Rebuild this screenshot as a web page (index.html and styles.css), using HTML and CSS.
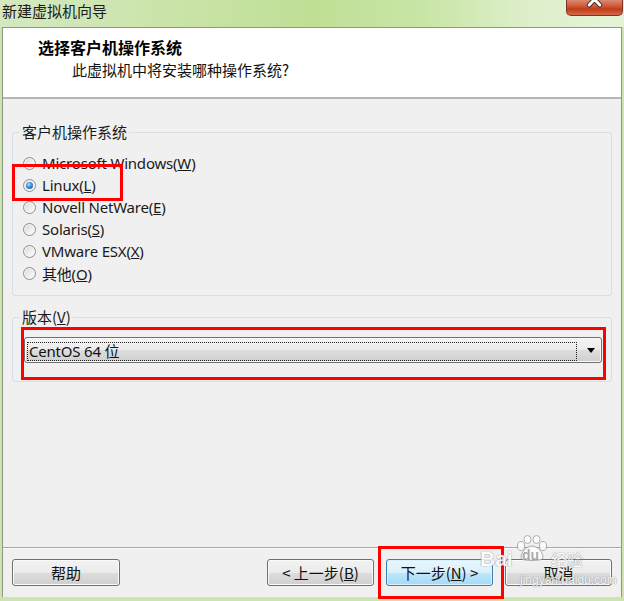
FILE: index.html
```html
<!DOCTYPE html>
<html lang="zh-CN">
<head>
<meta charset="utf-8">
<title>新建虚拟机向导</title>
<link rel="stylesheet" href="styles.css">
</head>
<body>
<div class="window">
  <div class="titlebar">
    <span class="title">新建虚拟机向导</span>
    <div class="close">
      <svg width="57" height="15" viewBox="0 0 57 15">
        <path d="M23 -7 L34 5 M34 -7 L23 5" stroke="#4a2a24" stroke-width="5" stroke-linecap="round"/>
        <path d="M23 -7 L34 5 M34 -7 L23 5" stroke="#ffffff" stroke-width="3" stroke-linecap="round"/>
      </svg>
    </div>
  </div>
  <div class="client">
    <div class="header">
      <div class="h-title">选择客户机操作系统</div>
      <div class="h-sub">此虚拟机中将安装哪种操作系统?</div>
    </div>
    <div class="content">
      <fieldset class="group os-group">
        <legend>客户机操作系统</legend>
        <div class="radio"><span class="dot"></span><span class="rtext">Microsoft Windows(<u>W</u>)</span></div>
        <div class="radio checked"><span class="dot"></span><span class="rtext">Linux(<u>L</u>)</span><span class="mark mark-linux"></span></div>
        <div class="radio"><span class="dot"></span><span class="rtext">Novell NetWare(<u>E</u>)</span></div>
        <div class="radio"><span class="dot"></span><span class="rtext">Solaris(<u>S</u>)</span></div>
        <div class="radio"><span class="dot"></span><span class="rtext">VMware ESX(<u>X</u>)</span></div>
        <div class="radio"><span class="dot"></span><span class="rtext">其他(<u>O</u>)</span></div>
      </fieldset>
      <fieldset class="group ver-group">
        <legend>版本(<u>V</u>)</legend>
        <div class="mark-box">
          <div class="combo">
            <span class="combo-focus">CentOS 64 位</span>
            <span class="arrow"></span>
          </div>
        </div>
      </fieldset>
    </div>
    <div class="footer">
      <button class="btn">帮助</button>
      <div class="nav">
        <button class="btn">&lt; 上一步(<u>B</u>)</button>
        <div class="btn-wrap">
          <button class="btn btn-default">下一步(<u>N</u>) &gt;</button>
          <span class="mark mark-next"></span>
        </div>
        <button class="btn">取消</button>
      </div>
    </div>
  </div>
  <div class="wm-baidu">
    <span class="wm-bai">Bai</span>
    <span class="wm-paw">
      <svg width="32" height="26" viewBox="0 0 32 26">
        <g fill="#ffffff" stroke="#a0a0a0" stroke-width="1">
          <ellipse cx="5" cy="11" rx="3.5" ry="4.5"/>
          <ellipse cx="11.5" cy="4.5" rx="3.5" ry="4"/>
          <ellipse cx="20.5" cy="4.5" rx="3.5" ry="4"/>
          <ellipse cx="27" cy="11" rx="3.5" ry="4.5"/>
          <path d="M16 11 C10 11 5 18 5 22 C5 25 9 25.5 16 25.5 C23 25.5 27 25 27 22 C27 18 22 11 16 11 Z"/>
        </g>
      </svg>
      <span class="wm-du">du</span>
    </span>
    <span class="wm-jy">经验</span>
    <span class="wm-url">jingyan.baidu.com</span>
  </div>
</div>
</body>
</html>
```
FILE: styles.css
```css
* { box-sizing: border-box; }
html, body { margin: 0; padding: 0; }
body {
  width: 624px;
  height: 601px;
  overflow: hidden;
  background: #cde4b0;
  font-family: "Noto Sans", "Noto Sans CJK SC", sans-serif;
  font-size: 14px;
  color: #000;
}
.window {
  position: relative;
  display: flex;
  flex-direction: column;
  height: 601px;
}
.titlebar {
  height: 27px;
  flex: none;
  display: flex;
  justify-content: space-between;
  align-items: flex-start;
  padding-left: 2px;
  background: linear-gradient(90deg, #d5e8c1 0%, #cbe4ab 25%, #c0df95 50%, #c9e5a6 68%, #deefcb 85%, #e6f3d8 100%);
}
.title {
  font-family: "Noto Sans CJK SC", sans-serif;
  font-size: 15px;
  line-height: 19px;
  margin-top: 1px;
  color: #1b1b1b;
}
.close {
  width: 57px;
  height: 16px;
  margin-right: 1px;
  border: 1px solid #7c3528;
  border-top: none;
  border-radius: 0 0 5px 5px;
  background: linear-gradient(#d98a72 0%, #d25a38 40%, #c13b18 60%, #d4694a 100%);
  overflow: hidden;
  display: flex;
}
.client {
  flex: 1;
  display: flex;
  flex-direction: column;
  margin: 0 2px 4px 2px;
  border: 1px solid #8b9985;
  border-bottom: none;
  background: #f0f0f0;
}
.header {
  height: 71px;
  flex: none;
  background: #ffffff;
  border-bottom: 2px solid #b6b6b6;
  padding: 9px 0 0 35px;
  font-family: "Noto Sans CJK SC", sans-serif;
}
.h-title {
  font-size: 16px;
  font-weight: bold;
  line-height: 20px;
}
.h-sub {
  font-size: 15px;
  line-height: 20px;
  margin: 3px 0 0 34px;
  color: #111;
}
.content {
  flex: 1;
  padding: 24px 9px 0 9px;
  display: flex;
  flex-direction: column;
}
.group {
  margin: 0;
  min-width: 0;
  border: 1px solid #d5dfe5;
  border-radius: 3px;
}
.group legend {
  padding: 0 2px;
  font-family: "Noto Sans CJK SC", sans-serif;
  font-size: 15px;
  line-height: 18px;
  color: #1a1a1a;
}
.os-group {
  padding: 11px 0 11px 10px;
}
.os-group legend { margin-left: -3px; }
.ver-group {
  margin-top: 12px;
  padding: 1px 5px 1px 8px;
}
.ver-group legend { margin-left: -1px; }
.radio {
  position: relative;
  display: flex;
  align-items: center;
  height: 22px;
  gap: 6px;
  font-size: 15px;
  color: #1a1a1a;
}
.rtext { font-family: "Noto Sans", "Noto Sans CJK SC", sans-serif; letter-spacing: -0.2px; }
.dot {
  position: relative;
  width: 13px;
  height: 13px;
  flex: none;
  border-radius: 50%;
  border: 1px solid #8e8f8f;
  background: linear-gradient(135deg, #d6d6d6 0%, #f0f0f0 60%, #ffffff 100%);
  box-shadow: inset 0 0 0 1px #f6f6f6;
}
.checked .dot::after {
  content: "";
  position: absolute;
  left: 2px;
  top: 2px;
  width: 7px;
  height: 7px;
  border-radius: 50%;
  background: radial-gradient(circle at 40% 35%, #a8e0ff 0%, #3a8ed8 45%, #154f8f 100%);
}
.mark {
  position: absolute;
  border: 3px solid #ff0000;
  pointer-events: none;
}
.mark-linux {
  left: -11px;
  top: -10px;
  width: 111px;
  height: 37px;
}
.mark-box {
  border: 3px solid #ff0000;
  padding: 7px 1px 14px 0;
}
.combo {
  height: 26px;
  display: flex;
  align-items: center;
  padding: 0 6px 0 2px;
  border: 1px solid #707070;
  border-radius: 3px;
  background: linear-gradient(#f4f4f4 0%, #ebebeb 50%, #dddddd 51%, #cfcfcf 100%);
  box-shadow: inset 0 0 0 1px #fafafa;
}
.combo-focus {
  flex: 1;
  height: 19px;
  margin-top: 3px;
  border: 1px dotted #222;
  font-size: 15px;
  line-height: 17px;
  padding-left: 1px;
  color: #111;
  font-family: "Noto Sans", "Noto Sans CJK SC", sans-serif;
  letter-spacing: -0.2px;
}
.arrow {
  width: 0;
  height: 0;
  margin-left: 10px;
  border-left: 4px solid transparent;
  border-right: 4px solid transparent;
  border-top: 5px solid #000;
}
.footer {
  flex: none;
  border-top: 1px solid #a6a6a6;
  box-shadow: inset 0 1px 0 #fafafa;
  padding: 11px 9px;
  display: flex;
  justify-content: space-between;
}
.nav {
  display: flex;
  gap: 12px;
}
.btn-wrap { position: relative; display: flex; }
.btn {
  width: 108px;
  height: 27px;
  padding: 0;
  margin: 0;
  border: 1px solid #707070;
  border-radius: 3px;
  background: linear-gradient(#f2f2f2 0%, #ebebeb 50%, #dddddd 51%, #cfcfcf 100%);
  box-shadow: inset 0 0 0 1px #fbfbfb;
  font-family: "Noto Sans CJK SC", sans-serif;
  font-size: 15px;
  line-height: 23px;
  color: #111;
}
.nav .btn { width: 107px; }
.btn-default {
  border-color: #3c7fb1;
  background: linear-gradient(#eaf6fd 0%, #d9f0fc 50%, #bee6fd 51%, #a7d9f5 100%);
  box-shadow: inset 0 0 0 1px #d9f2ff;
}
.mark-next {
  left: -8px;
  top: -13px;
  width: 126px;
  height: 53px;
}
.wm-baidu {
  position: absolute;
  left: 478px;
  top: 534px;
  width: 130px;
  height: 56px;
  pointer-events: none;
  opacity: 0.85;
}
.wm-bai, .wm-du, .wm-jy, .wm-url {
  position: absolute;
  color: #ffffff;
  text-shadow: 0 0 1px #8a8a8a, 0 0 1px #8a8a8a;
  white-space: nowrap;
}
.wm-bai {
  left: 2px;
  top: 13px;
  font-family: "Liberation Sans", sans-serif;
  font-weight: bold;
  font-size: 21px;
  line-height: 24px;
}
.wm-paw {
  position: absolute;
  left: 38px;
  top: 1px;
  width: 32px;
  height: 26px;
}
.wm-paw svg { display: block; }
.wm-du {
  left: 6px;
  top: 13px;
  font-family: "Liberation Sans", sans-serif;
  font-weight: bold;
  font-size: 14px;
  line-height: 14px;
  color: #a0a0a0;
  text-shadow: none;
}
.wm-jy {
  left: 73px;
  top: 16px;
  font-family: "Noto Sans CJK SC", sans-serif;
  font-size: 16px;
  line-height: 18px;
}
.wm-url {
  left: 42px;
  top: 39px;
  font-family: "Liberation Sans", sans-serif;
  font-size: 12px;
  line-height: 14px;
}
```
